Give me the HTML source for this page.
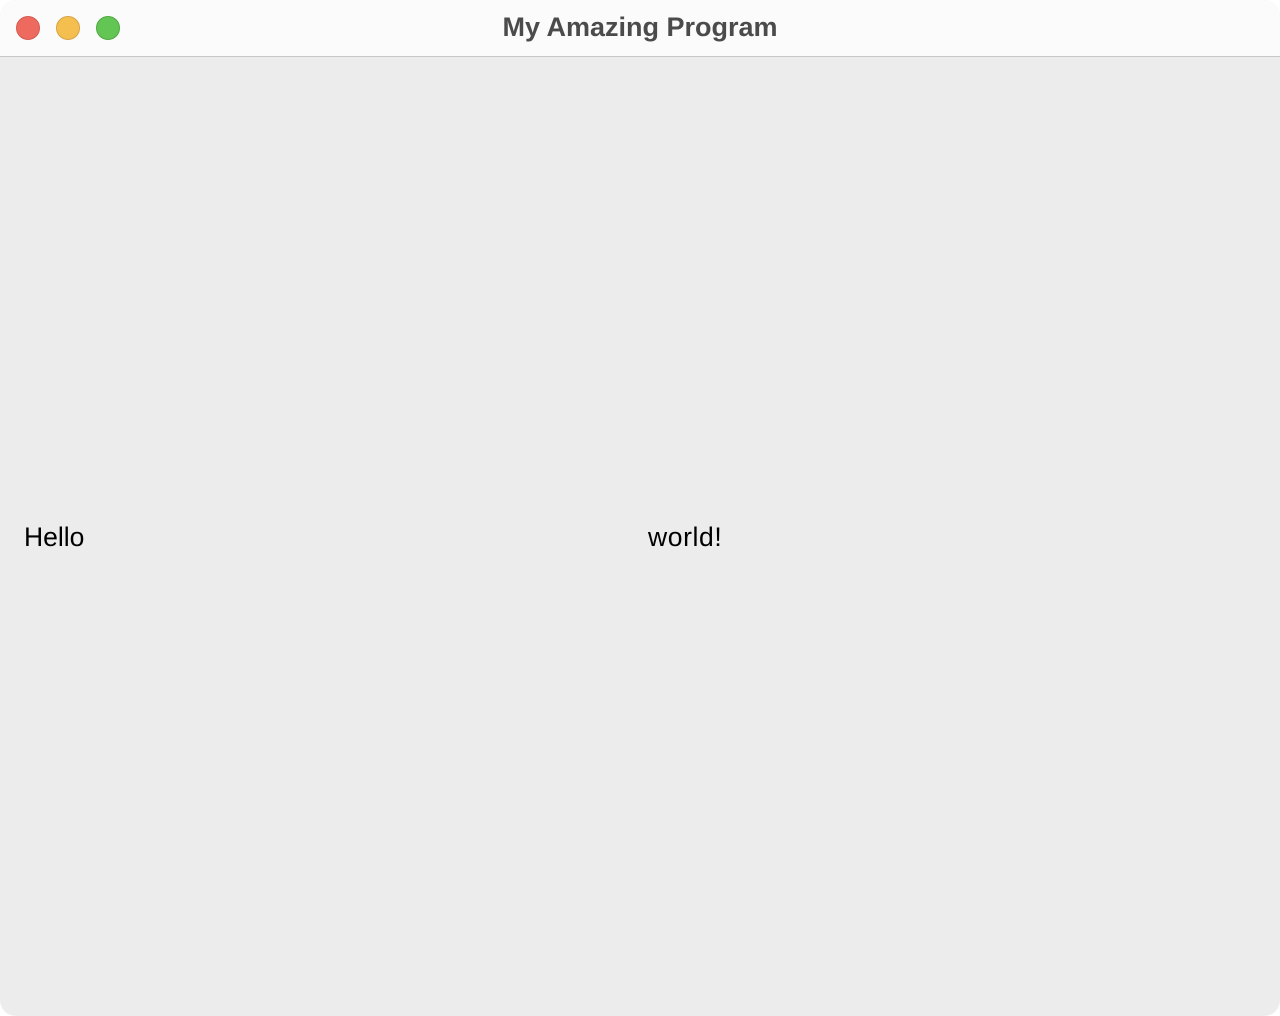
<!DOCTYPE html>
<html><head><meta charset="utf-8"><style>
html,body{margin:0;padding:0;background:#fff;width:1280px;height:1016px;overflow:hidden}
.win{position:absolute;left:0;top:0;width:1280px;height:1016px;background:#ececec;border-radius:16px;overflow:hidden;font-family:"Liberation Sans",sans-serif}
.tb{position:absolute;left:0;top:0;width:1280px;height:56px;background:#fbfbfb;border-bottom:1px solid #c8c8c8}
.c{position:absolute;top:16px;width:24px;height:24px;border-radius:50%;box-sizing:border-box}
.title{position:absolute;left:0;width:1280px;top:12px;text-align:center;font-weight:bold;font-size:27px;line-height:30px;color:#4b4b4b}
.t{position:absolute;top:521px;font-size:26.5px;line-height:32px;color:#000}
</style></head><body>
<div class="win">
<div class="tb">
<div class="c" style="left:16px;background:#ee6a5f;border:1px solid #d45a50"></div>
<div class="c" style="left:56px;background:#f5bf4f;border:1px solid #d6a243"></div>
<div class="c" style="left:96px;background:#62c554;border:1px solid #4fa83f"></div>
<div class="title">My Amazing Program</div>
</div>
<div class="t" style="left:24px">Hello</div>
<div class="t" style="left:648px;letter-spacing:0.6px">world!</div>
</div>
</body></html>
